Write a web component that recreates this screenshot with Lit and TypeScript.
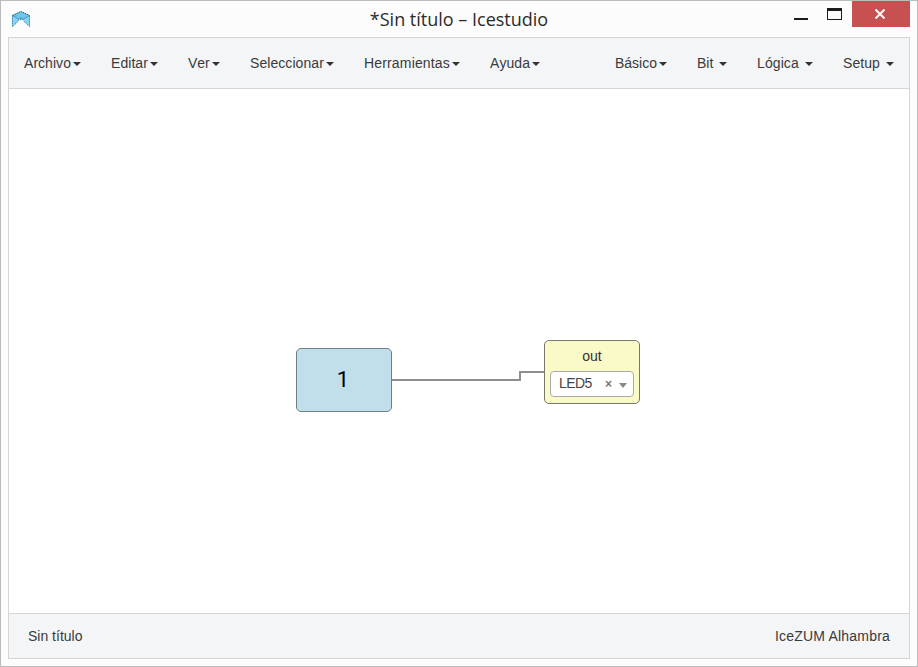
import { LitElement, html, css } from "lit";
import { customElement, property } from "lit/decorators.js";
import { styleMap } from "lit/directives/style-map.js";

@customElement("menu-item")
class MenuItem extends LitElement {
  @property() label = "";
  @property({ type: Number }) width = 0;
  @property({ type: Number }) tracking = 0;
  @property({ type: Boolean }) spaced = false;

  static styles = css`
    :host { display: flex; align-items: center; padding: 0 15px; white-space: nowrap; }
    .label { font-kerning: none; }
    .caret { margin-left: 2px; border-top: 4px solid #333; border-left: 4px solid transparent; border-right: 4px solid transparent; margin-top: 2px; }
    .wide { margin-left: 6px; }
  `;

  render() {
    const size = { width: `${this.width}px`, letterSpacing: `${this.tracking}px` };
    return html`<span class="label" style=${styleMap(size)}>${this.label}</span><span class="caret ${this.spaced ? "wide" : ""}"></span>`;
  }
}

@customElement("title-bar")
class TitleBar extends LitElement {
  static styles = css`
    :host { display: flex; justify-content: space-between; height: 36px; }
    .side { width: 130px; }
    .logo { display: block; margin: 9px 0 0 10px; }
    .title { font: 18px/37px "Open Sans", "Noto Sans", sans-serif; letter-spacing: 0; color: #2b2b2b; white-space: nowrap; }
    .buttons { display: flex; justify-content: flex-end; width: 130px; padding-right: 7px; box-sizing: border-box; }
    .min { width: 14px; height: 2px; background: #1c1c1c; margin: 17px 19px 0 0; }
    .max { width: 15px; height: 12px; box-sizing: border-box; border: 1px solid #1c1c1c; border-top-width: 3px; margin: 7px 10px 0 0; }
    .close { width: 58px; height: 26px; background: #c75050; display: flex; align-items: center; justify-content: center; }
    .cross { margin-right: 2px; }
  `;

  render() {
    return html`
      <div class="side">
        <svg class="logo" width="20" height="20" viewBox="0 0 20 20">
          <path d="M1 5.5 L10 1.5 L19 5.5 V17 L13 11.5 L12 9.5 H8 L7 11.5 L1 17 Z" fill="#86d3f5" />
          <path d="M1 5.5 L10 1.5 L19 5.5 L12.5 8.5 H7.5 Z" fill="#6fc6ee" />
          <path d="M1.5 5.5 L7.5 9 L10 8 L12.5 9 L18.5 5.5" fill="none" stroke="#357f9f" stroke-dasharray="1.5 .7" />
          <path d="M1.5 5.5 L10 1.5 L18.5 5.5" fill="none" stroke="#24566c" stroke-dasharray="1.5 .8" />
          <path d="M1.5 5.5 V16.5 L7 11.5 L8 9.5 H12 L13 11.5 L18.5 16.5 V5.5" fill="none" stroke="#397d9a" stroke-width=".9" stroke-dasharray="1.4 1" />
        </svg>
      </div>
      <div class="title">*Sin título – Icestudio</div>
      <div class="buttons">
        <div class="min"></div>
        <div class="max"></div>
        <div class="close">
          <svg class="cross" width="12" height="10" viewBox="0 0 12 10">
            <path d="M1.5 .5 L10.5 9.5 M10.5 .5 L1.5 9.5" stroke="#fff" stroke-width="2" />
          </svg>
        </div>
      </div>
    `;
  }
}

@customElement("block-canvas")
class BlockCanvas extends LitElement {
  static styles = css`
    :host { display: block; position: relative; background: #fff; overflow: hidden; }
    .wire { position: absolute; left: 383px; top: 275px; }
    .block { position: absolute; box-sizing: border-box; width: 96px; height: 64px; border: 1px solid #777; border-radius: 5px; }
    .constant { left: 287px; top: 259px; background: #c0dfeb; border-color: #6f7f88; color: #000; font-family: Roboto, sans-serif; font-size: 22px; line-height: 61px; text-align: center; padding-right: 2px; }
    .output { left: 535px; top: 251px; background: #fafac8; border-color: #77776a; display: flex; flex-direction: column; padding: 0 5px; text-align: center; }
    .name { line-height: 30px; color: #333; }
    .select { display: flex; align-items: center; box-sizing: border-box; height: 26px; width: 84px; border: 1px solid #aaa; border-radius: 4px; background: #fff; color: #444; padding: 0 6px 0 8px; }
    .value { flex: 1; text-align: left; line-height: 22px; margin-bottom: 2px; letter-spacing: -0.6px; }
    .clear { font-size: 12px; font-weight: bold; color: #777; margin-right: 7px; line-height: 22px; }
    .arrow { border-top: 5px solid #888; border-left: 4px solid transparent; border-right: 4px solid transparent; margin-top: 3px; }
  `;

  render() {
    return html`
      <svg class="wire" width="153" height="24" viewBox="0 0 153 24">
        <path d="M0 16 H128 V8 H153" fill="none" stroke="#8f8d8f" stroke-width="2" />
      </svg>
      <div class="block constant">1</div>
      <div class="block output">
        <div class="name">out</div>
        <div class="select"><span class="value">LED5</span><span class="clear">×</span><span class="arrow"></span></div>
      </div>
    `;
  }
}

interface Entry {
  label: string;
  width: number;
  tracking: number;
  spaced?: boolean;
}

@customElement("app-root")
class AppRoot extends LitElement {
  static styles = css`
    :host { display: flex; flex-direction: column; box-sizing: border-box; width: 918px; height: 667px; border: 1px solid #bcbcbc; background: #fcfcfc; font: 14px/20px "Liberation Sans", Arial, sans-serif; color: #3a3a3a; }
    .window { flex: 1; display: flex; flex-direction: column; margin: 0 7px 7px; border: 1px solid #d3d5d7; }
    .bar { display: flex; justify-content: space-between; background: #f4f5f7; }
    .menu { height: 50px; border-bottom: 1px solid #d3d5d7; }
    .group { display: flex; }
    .canvas { flex: 1; }
    .status { height: 44px; align-items: center; border-top: 1px solid #d3d5d7; padding: 0 19px; }
    .board { letter-spacing: 0.2px; }
  `;

  private left: Entry[] = [
    { label: "Archivo", width: 47, tracking: 0.04 },
    { label: "Editar", width: 37, tracking: 0.06 },
    { label: "Ver", width: 22, tracking: 0 },
    { label: "Seleccionar", width: 74, tracking: 0.07 },
    { label: "Herramientas", width: 86, tracking: 0.16 },
    { label: "Ayuda", width: 40, tracking: 0.06 },
  ];

  private right: Entry[] = [
    { label: "Básico", width: 42, tracking: 0 },
    { label: "Bit", width: 16, tracking: 0, spaced: true },
    { label: "Lógica", width: 42, tracking: 0.1, spaced: true },
    { label: "Setup", width: 37, tracking: 0.06, spaced: true },
  ];

  private group(entries: Entry[]) {
    return html`<div class="group">
      ${entries.map((e) => html`<menu-item label=${e.label} width=${e.width} tracking=${e.tracking} ?spaced=${!!e.spaced}></menu-item>`)}
    </div>`;
  }

  render() {
    return html`
      <title-bar></title-bar>
      <div class="window">
        <div class="bar menu">${this.group(this.left)}${this.group(this.right)}</div>
        <block-canvas class="canvas"></block-canvas>
        <div class="bar status"><span>Sin título</span><span class="board">IceZUM Alhambra</span></div>
      </div>
    `;
  }
}
